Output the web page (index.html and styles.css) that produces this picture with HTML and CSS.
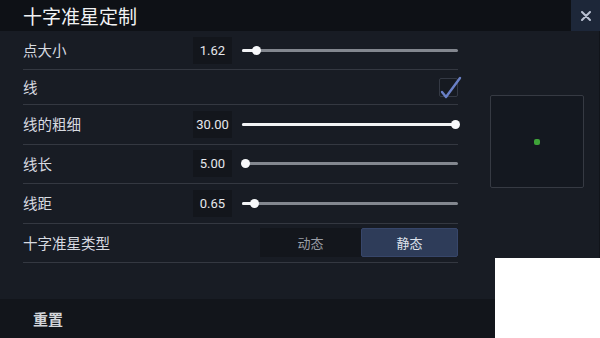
FILE: index.html
```html
<!DOCTYPE html>
<html lang="zh-CN">
<head>
    <meta charset="UTF-8">
    <meta name="viewport" content="width=device-width, initial-scale=1.0">
    <title>十字准星定制</title>
    <link rel="stylesheet" href="styles.css">
</head>
<body>
    <div class="dialog">
        <!-- 标题栏 -->
        <div class="titlebar">
            <h1 class="title">十字准星定制</h1>
            <button class="close" aria-label="关闭">
                <svg width="10" height="10" viewBox="0 0 10 10">
                    <path d="M1 1 L9 9 M9 1 L1 9" stroke="#b9c1d2" stroke-width="2" stroke-linecap="round"/>
                </svg>
            </button>
        </div>

        <div class="main">
            <!-- 设置项 -->
            <div class="settings">
                <div class="row row-first">
                    <span class="label">点大小</span>
                    <span class="value">1.62</span>
                    <div class="slider">
                        <div class="fill" style="width: 14px"></div>
                        <div class="thumb" style="left: 14px"></div>
                    </div>
                </div>
                <div class="row row-check">
                    <span class="label">线</span>
                    <span class="checkbox">
                        <svg width="22" height="22" viewBox="0 0 22 22">
                            <path d="M2 15 L6 20 L20 1" fill="none" stroke="#6a80c6" stroke-width="2.4" stroke-linecap="round" stroke-linejoin="round"/>
                        </svg>
                    </span>
                </div>
                <div class="row">
                    <span class="label">线的粗细</span>
                    <span class="value">30.00</span>
                    <div class="slider">
                        <div class="fill" style="width: 213px"></div>
                        <div class="thumb" style="left: 213px"></div>
                    </div>
                </div>
                <div class="row">
                    <span class="label">线长</span>
                    <span class="value">5.00</span>
                    <div class="slider">
                        <div class="fill" style="width: 3px"></div>
                        <div class="thumb" style="left: 3px"></div>
                    </div>
                </div>
                <div class="row">
                    <span class="label">线距</span>
                    <span class="value">0.65</span>
                    <div class="slider">
                        <div class="fill" style="width: 12px"></div>
                        <div class="thumb" style="left: 12px"></div>
                    </div>
                </div>
                <div class="row">
                    <span class="label">十字准星类型</span>
                    <div class="segmented">
                        <span class="seg">动态</span>
                        <span class="seg active">静态</span>
                    </div>
                </div>
            </div>

            <!-- 预览 -->
            <div class="preview-col">
                <div class="preview">
                    <span class="dot"></span>
                </div>
            </div>
        </div>

        <div class="footer">
            <button class="reset">重置</button>
        </div>

        <div class="cutout"></div>
    </div>
</body>
</html>
```

FILE: styles.css
```css
* {
    box-sizing: border-box;
}

body {
    margin: 0;
    background-color: #fff;
    font-family: "Noto Sans CJK SC", "Noto Sans", sans-serif;
    color: #d7dae0;
}

.dialog {
    position: relative;
    width: 600px;
    height: 338px;
    overflow: hidden;
}

.titlebar {
    display: flex;
    align-items: center;
    height: 31px;
    background-color: #0e1116;
}

.title {
    flex: 1;
    margin: 0 0 0 23px;
    font-size: 19px;
    font-weight: normal;
    line-height: 1;
    color: #f1f2f4;
}

.close {
    display: flex;
    align-items: center;
    justify-content: center;
    width: 29px;
    height: 31px;
    padding: 0;
    border: none;
    background-color: #1d2739;
}

.main {
    display: flex;
    height: 268px;
    background-color: #181c24;
    border-right: 1px solid #11141a;
}

.settings {
    width: 458px;
    padding-left: 23px;
}

.row {
    display: flex;
    align-items: center;
    height: 39.5px;
    border-bottom: 1px solid #343841;
}

.row-first {
    height: 39px;
}

.row-check {
    height: 35px;
}

.label {
    flex: 1;
    font-size: 14.5px;
    line-height: 1;
}

.value {
    width: 39px;
    height: 27px;
    margin-right: 10px;
    background-color: #13161c;
    font-family: Roboto, "Noto Sans", sans-serif;
    font-size: 13px;
    line-height: 27px;
    text-align: center;
    color: #e6e8ec;
}

.slider {
    position: relative;
    width: 216px;
    height: 3px;
    background-color: #83878f;
    border-radius: 2px;
}

.fill {
    height: 3px;
    background-color: #f2f3f5;
    border-radius: 2px;
}

.thumb {
    position: absolute;
    top: -3px;
    width: 9px;
    height: 9px;
    margin-left: -4px;
    border-radius: 50%;
    background-color: #f7f8fa;
}

.checkbox {
    position: relative;
    width: 19px;
    height: 19px;
    border: 1px solid #343944;
    border-radius: 2px;
    background-color: #161a21;
}

.checkbox svg {
    position: absolute;
    left: 0;
    top: -2px;
    overflow: visible;
}

.segmented {
    display: flex;
    width: 198px;
    height: 29px;
    background-color: #13161c;
}

.seg {
    flex: 1;
    font-size: 13px;
    line-height: 29px;
    text-align: center;
    color: #9a9ea6;
}

.seg.active {
    flex: 0 0 97px;
    background-color: #2e3c59;
    border: 1px solid #37466a;
    border-radius: 2px;
    line-height: 27px;
    color: #dfe3ec;
}

.preview-col {
    flex: 1;
}

.preview {
    display: flex;
    align-items: center;
    justify-content: center;
    width: 94px;
    height: 93px;
    margin: 64px 0 0 32px;
    border: 1px solid #363a43;
    border-radius: 2px;
    background-color: #141820;
}

.dot {
    width: 6px;
    height: 6px;
    border-radius: 2px;
    background-color: #3ea338;
}

.footer {
    display: flex;
    align-items: center;
    height: 39px;
    background-color: #12151b;
}

.reset {
    margin-left: 33px;
    padding: 0;
    border: none;
    background: none;
    font-family: inherit;
    font-size: 15px;
    font-weight: bold;
    color: #d2d5da;
}

/* 截图右下角的白块 */
.cutout {
    position: absolute;
    right: 0;
    bottom: 0;
    width: 105px;
    height: 80px;
    background-color: #fff;
}
```
